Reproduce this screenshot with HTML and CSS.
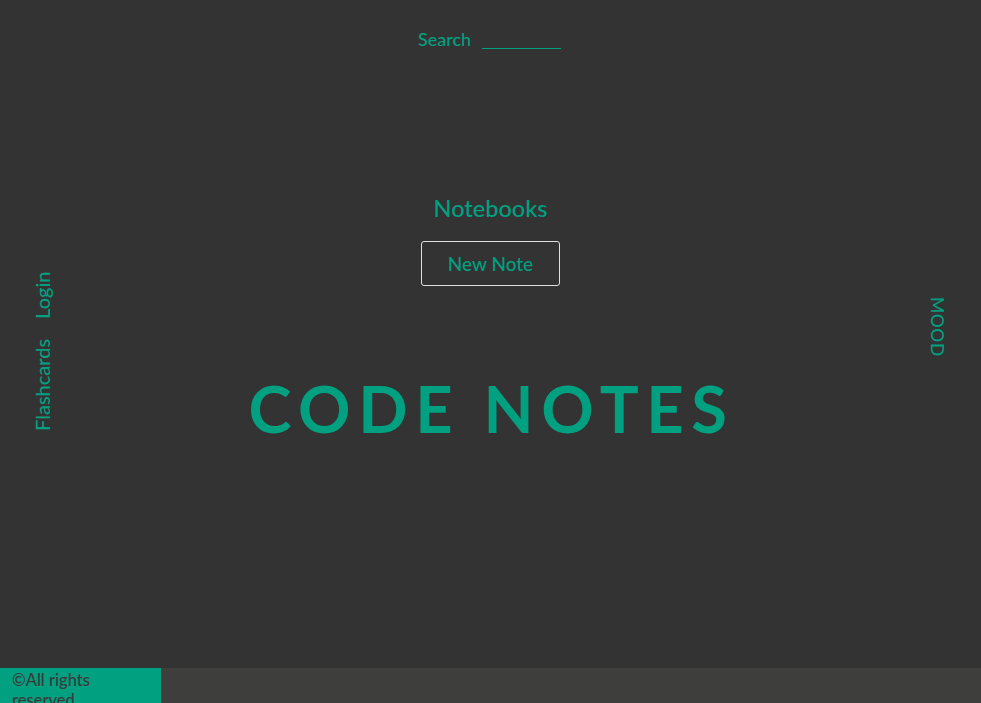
FILE: index.html
```html
<!DOCTYPE html>
<html lang="en">
<head>
<meta charset="utf-8">
<title>Code Notes</title>
<link rel="stylesheet" href="styles.css">
</head>
<body>
<div class="page">
  <header class="top">
    <label class="search">
      <span class="search-label">Search</span>
      <input class="search-input" type="text">
    </label>
  </header>
  <main class="main">
    <nav class="side-left">
      <a class="side-link" href="#">Flashcards</a>
      <a class="side-link" href="#">Login</a>
    </nav>
    <section class="center">
      <h2 class="notebooks">Notebooks</h2>
      <button class="new-note" type="button">New Note</button>
      <h1 class="title">CODE NOTES</h1>
    </section>
    <aside class="side-right">
      <span class="mood">MOOD</span>
    </aside>
  </main>
  <footer class="footer">
    <div class="copy">©All rights reserved</div>
  </footer>
</div>
</body>
</html>
```
FILE: styles.css
```css
* { box-sizing: border-box; }
html, body { margin: 0; padding: 0; }
body {
  background: #333333;
  font-family: "Lato", "Open Sans", sans-serif;
  font-weight: 500;
  color: #00a080;
}
.page {
  height: 703px;
  display: flex;
  flex-direction: column;
  overflow: hidden;
}
.top {
  display: flex;
  justify-content: center;
  padding-top: 28px;
  height: 60px;
}
.search {
  display: flex;
  align-items: flex-end;
  gap: 11px;
  height: 22px;
  padding-right: 2px;
}
.search-label {
  font-size: 18px;
  line-height: 22px;
}
.search-input {
  width: 79px;
  height: 20px;
  margin-bottom: 1px;
  background: transparent;
  border: none;
  border-bottom: 1px solid #00a080;
  outline: none;
  color: #00a080;
  padding: 0;
}
.main {
  flex: 1;
  display: grid;
  grid-template-columns: 80px 1fr 80px;
}
.side-left {
  display: flex;
  writing-mode: vertical-lr;
  transform: rotate(180deg);
  align-items: center;
  justify-content: center;
  gap: 20px;
  padding-top: 25px;
  padding-right: 4px;
}
.side-link {
  color: #00a080;
  text-decoration: none;
  font-size: 20px;
}
.center {
  display: flex;
  flex-direction: column;
  align-items: center;
  padding-top: 133px;
}
.notebooks {
  margin: 0;
  font-size: 23.5px;
  font-weight: 500;
  line-height: 30px;
}
.new-note {
  margin-top: 18px;
  width: 139px;
  height: 45px;
  background: transparent;
  border: 1px solid #e0e0e0;
  border-radius: 3px;
  color: #00a080;
  font-family: inherit;
  font-weight: 500;
  font-size: 19px;
  padding: 0;
}
.title {
  margin: 87px 0 0;
  font-size: 65px;
  font-weight: 700;
  letter-spacing: 7.6px;
  line-height: 70px;
  padding-left: 2px;
}
.side-right {
  display: flex;
  align-items: center;
  justify-content: center;
  padding-bottom: 74px;
  padding-right: 8px;
}
.mood {
  writing-mode: vertical-rl;
  font-size: 17.5px;
  letter-spacing: 0.5px;
}
.footer {
  height: 35px;
  background: #3e3e3c;
  display: flex;
}
.copy {
  width: 161px;
  background: #00a080;
  color: #3a3a3a;
  font-size: 16.5px;
  line-height: 20px;
  padding: 2px 12px 0;
}
```
